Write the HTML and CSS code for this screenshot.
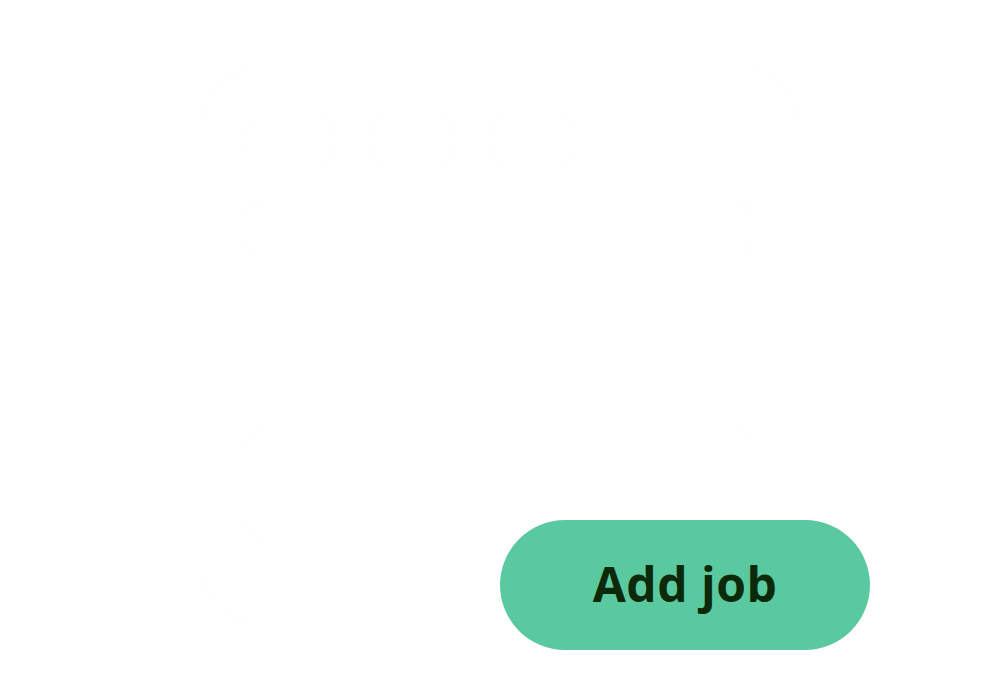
FILE: index.html
```html
<!DOCTYPE html>
<html lang="en">
<head>
<meta charset="utf-8">
<title>Jobs</title>
<link rel="stylesheet" href="styles.css">
</head>
<body>
<main class="page">
  <section class="card">
    <div class="chips">
      <span class="chip"></span>
      <span class="chip"></span>
      <span class="chip"></span>
    </div>
    <div class="field"></div>
    <div class="spacer"></div>
    <div class="block"></div>
  </section>
  <button class="fab" type="button">Add job</button>
</main>
</body>
</html>
```
FILE: styles.css
```css
html, body {
  margin: 0;
  padding: 0;
  background: #ffffff;
}
.page {
  position: relative;
  width: 1000px;
  height: 700px;
  padding: 70px 0 0 205px;
  box-sizing: border-box;
  font-family: "Open Sans", "Noto Sans", sans-serif;
}
.card {
  width: 590px;
  height: 550px;
  box-sizing: border-box;
  border-radius: 44px;
  background: #ffffff;
  border: 1px solid #fefefe;
  padding: 46px 40px 0 40px;
  display: flex;
  flex-direction: column;
  gap: 35px;
}
.chips {
  display: flex;
  gap: 35px;
}
.chip {
  width: 85px;
  height: 45px;
  border-radius: 14px;
  background: #ffffff;
  border: 1px solid #fefefe;
}
.field {
  width: 505px;
  height: 56px;
  border-radius: 18px;
  background: #ffffff;
  border: 1px solid #fefefe;
}
.spacer {
  height: 100px;
}
.block {
  width: 505px;
  height: 110px;
  border-radius: 18px;
  background: #ffffff;
  border: 1px solid #fefefe;
}
.fab {
  position: absolute;
  left: 500px;
  top: 520px;
  width: 370px;
  height: 130px;
  border: none;
  border-radius: 65px;
  background: #5bc99f;
  color: #0c2a0a;
  font-family: "Open Sans", "Noto Sans", sans-serif;
  font-weight: 700;
  font-size: 48px;
  letter-spacing: 0.5px;
  line-height: 1;
  padding: 0 0 2px 0;
  cursor: pointer;
}
```
